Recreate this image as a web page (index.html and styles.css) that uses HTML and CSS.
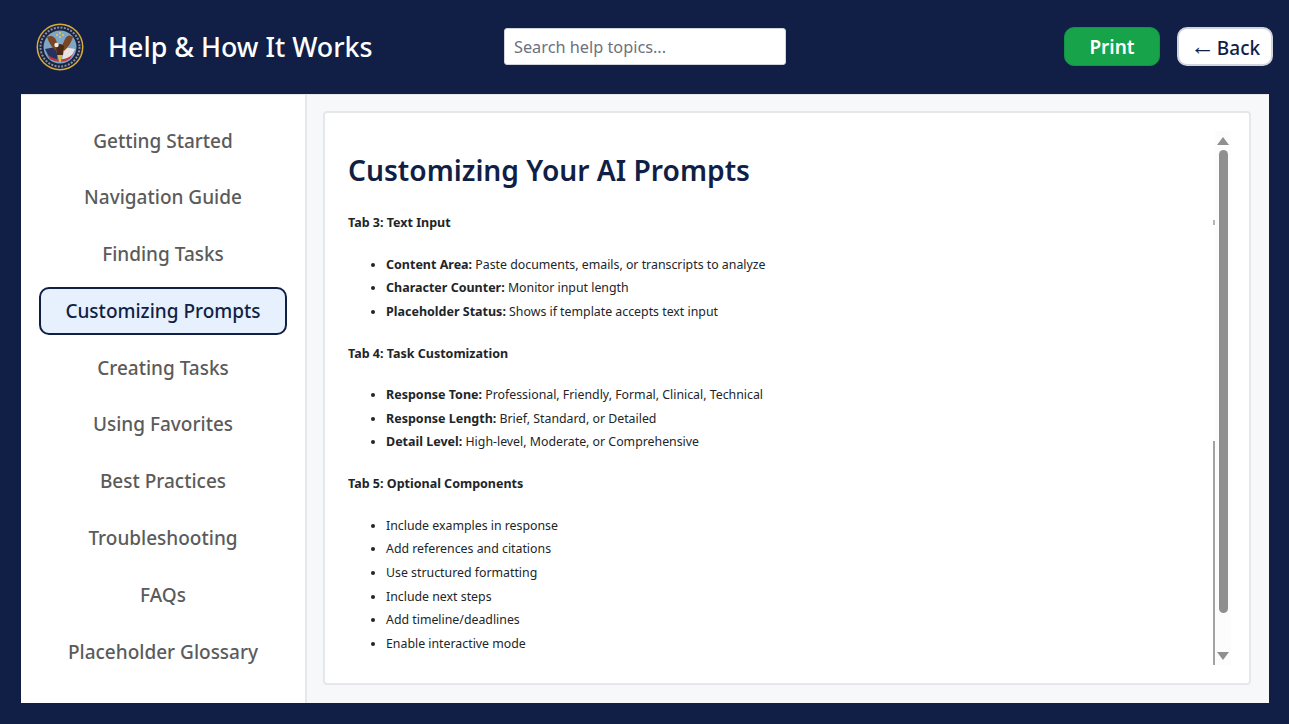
FILE: index.html
```html
<!DOCTYPE html>
<html lang="en">
<head>
    <meta charset="UTF-8">
    <meta name="viewport" content="width=device-width, initial-scale=1.0">
    <title>Help &amp; How It Works</title>
    <link rel="stylesheet" href="styles.css">
</head>
<body>
    <div class="header">
        <div class="brand">
            <svg class="seal" viewBox="0 0 48 48" width="48" height="48" aria-hidden="true">
                <circle cx="24" cy="24" r="23.5" fill="#d8ad3c"/>
                <circle cx="24" cy="24" r="22" fill="#1a2340"/>
                <circle cx="24" cy="24" r="19.5" fill="none" stroke="#8b8fa5" stroke-width="2" stroke-dasharray="2 1.4"/>
                <circle cx="24" cy="24" r="16.5" fill="#7fa6c4"/>
                <path d="M9 26 L20 24 L22 38 L14 36 Z" fill="#27305f"/>
                <path d="M39 26 L28 24 L26 38 L34 36 Z" fill="#e8e2e2"/>
                <path d="M11 31 Q17 37 24 36 Q31 37 37 31 L34 36 Q24 42 14 36 Z" fill="#b53a42"/>
                <path d="M11 14 Q17 11 20 17 L23 25 L20 28 Q14 23 11 14 Z" fill="#7a4522"/>
                <path d="M37 14 Q32 10 29 16 L25 25 L28 28 Q34 23 37 14 Z" fill="#7a4522"/>
                <path d="M20 23 Q24 19 28 23 L27 32 L21 32 Z" fill="#4a2a16"/>
                <circle cx="20.5" cy="22" r="2.2" fill="#f1ece2"/>
                <path d="M22 32 L26 32 L25 39 L23 39 Z" fill="#e0b53c"/>
                <g fill="#e8c84a">
                    <circle cx="24" cy="10" r="1"/><circle cx="21" cy="12" r="1"/><circle cx="27" cy="12" r="1"/>
                    <circle cx="24" cy="14" r="1"/>
                </g>
            </svg>
            <h1>Help &amp; How It Works</h1>
        </div>
        <input class="search" type="text" placeholder="Search help topics...">
        <div class="actions">
            <button class="btn btn-print">Print</button>
            <button class="btn btn-back"><span class="back-arrow">←</span> Back</button>
        </div>
    </div>

    <div class="main">
        <div class="sidebar">
            <a class="nav-item">Getting Started</a>
            <a class="nav-item">Navigation Guide</a>
            <a class="nav-item">Finding Tasks</a>
            <a class="nav-item active">Customizing Prompts</a>
            <a class="nav-item">Creating Tasks</a>
            <a class="nav-item">Using Favorites</a>
            <a class="nav-item">Best Practices</a>
            <a class="nav-item">Troubleshooting</a>
            <a class="nav-item">FAQs</a>
            <a class="nav-item">Placeholder Glossary</a>
        </div>

        <div class="content">
            <div class="card">
                <div class="article">
                    <h2>Customizing Your AI Prompts</h2>

                    <h3>Tab 3: Text Input</h3>
                    <ul>
                        <li><b>Content Area:</b> Paste documents, emails, or transcripts to analyze</li>
                        <li><b>Character Counter:</b> Monitor input length</li>
                        <li><b>Placeholder Status:</b> Shows if template accepts text input</li>
                    </ul>

                    <h3>Tab 4: Task Customization</h3>
                    <ul>
                        <li><b>Response Tone:</b> Professional, Friendly, Formal, Clinical, Technical</li>
                        <li><b>Response Length:</b> Brief, Standard, or Detailed</li>
                        <li><b>Detail Level:</b> High-level, Moderate, or Comprehensive</li>
                    </ul>

                    <h3>Tab 5: Optional Components</h3>
                    <ul>
                        <li>Include examples in response</li>
                        <li>Add references and citations</li>
                        <li>Use structured formatting</li>
                        <li>Include next steps</li>
                        <li>Add timeline/deadlines</li>
                        <li>Enable interactive mode</li>
                    </ul>
                </div>

                <div class="rail">
                    <div class="rail-mark"></div>
                    <div class="rail-line"></div>
                </div>

                <div class="scrollbar">
                    <div class="arrow arrow-up"></div>
                    <div class="thumb"></div>
                    <div class="arrow arrow-down"></div>
                </div>
            </div>
        </div>
    </div>
</body>
</html>
```

FILE: styles.css
```css
* {
    box-sizing: border-box;
    font-family: "Noto Sans", "Open Sans", sans-serif;
}

html, body {
    height: 100%;
}

body {
    margin: 0;
    background: #111f46;
    display: flex;
    flex-direction: column;
    overflow: hidden;
}

.header {
    height: 94px;
    display: flex;
    align-items: center;
    padding: 0 16px 0 36px;
}

.brand {
    display: flex;
    align-items: center;
    gap: 24px;
    width: 468px;
}

.seal {
    flex: none;
}

h1 {
    margin: 0 0 1px;
    color: #fff;
    font-size: 26.8px;
    font-weight: 500;
}

.search {
    width: 282px;
    height: 37px;
    margin-bottom: 1px;
    padding: 0 9px;
    border: 1px solid #d1d5db;
    border-radius: 3px;
    background: #fff;
    font-size: 16.3px;
}

.search::placeholder {
    color: #6b7280;
    opacity: 1;
}

.actions {
    margin-left: auto;
    margin-bottom: 1px;
    display: flex;
    gap: 17px;
}

.btn {
    height: 39px;
    border-radius: 10px;
    font-size: 19px;
    font-weight: 600;
    cursor: pointer;
    padding: 0;
}

.btn-print {
    width: 96px;
    background: #16a34a;
    border: 1px solid #15924a;
    color: #fff;
}

.btn-back {
    width: 96px;
    background: #fff;
    border: 2px solid #d1d5db;
    color: #111f46;
    font-weight: 500;
}

.back-arrow {
    font-size: 25px;
    font-weight: 400;
    line-height: 1;
    margin-right: -3px;
}

.main {
    height: 609px;
    margin: 0 20px 0 21px;
    display: flex;
    background: #f7f8fa;
    border-top: 1px solid #e5e7eb;
}

.sidebar {
    width: 286px;
    flex: none;
    background: #fff;
    border-right: 2px solid #e5e7eb;
    padding: 21.5px 18px 0;
    display: flex;
    flex-direction: column;
    gap: 8.8px;
}

.nav-item {
    height: 48px;
    display: flex;
    align-items: center;
    justify-content: center;
    border: 2px solid transparent;
    border-radius: 10px;
    color: #5b5b5b;
    font-size: 19px;
    font-weight: 500;
    white-space: nowrap;
}

.nav-item.active {
    background: #e6f1fd;
    border-color: #111f46;
    color: #111f46;
}

.content {
    flex: 1;
    padding: 16px 18px 18px 16px;
    display: flex;
}

.card {
    flex: 1;
    display: flex;
    background: #fff;
    border: 2px solid #e5e7eb;
    border-radius: 4px;
    padding: 18px 18px 18px 23px;
}

.article {
    flex: 1;
    overflow: hidden;
    color: #212529;
    font-size: 12.33px;
}

h2 {
    margin: 20px 0 25px;
    color: #111f46;
    font-size: 28.2px;
    font-weight: 600;
    line-height: 38px;
}

h3 {
    margin: 0 0 20.5px;
    font-size: 12.5px;
    font-weight: 700;
    line-height: 18px;
}

.article ul {
    margin: 0 0 20.9px;
    padding-left: 38px;
}

.article li {
    line-height: 23.7px;
}

.article b {
    font-size: 12.5px;
    font-weight: 700;
}

.rail {
    width: 2px;
    flex: none;
    display: flex;
    flex-direction: column;
    justify-content: space-between;
}

.rail-mark {
    width: 2px;
    height: 5px;
    margin-top: 89px;
    background: #b5b5b5;
}

.rail-line {
    width: 2px;
    height: 224px;
    background: #a3a3a3;
}

.scrollbar {
    width: 16px;
    flex: none;
    background: #fcfcfc;
    display: flex;
    flex-direction: column;
    align-items: center;
    padding: 6px 0 5px;
}

.thumb {
    width: 9px;
    height: 463px;
    margin: 5px 0 auto;
    background: #8f8f8f;
    border-radius: 5px;
}

.arrow {
    width: 0;
    height: 0;
    border-left: 6px solid transparent;
    border-right: 6px solid transparent;
}

.arrow-up {
    border-bottom: 8px solid #8f8f8f;
}

.arrow-down {
    border-top: 8px solid #8f8f8f;
}
```
